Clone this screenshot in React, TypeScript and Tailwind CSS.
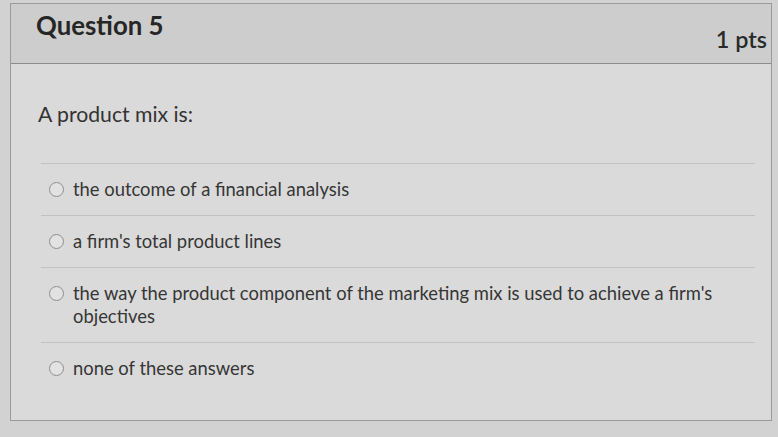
import React from "react";

const answers: string[][] = [
  ["the outcome of a financial analysis"],
  ["a firm's total product lines"],
  [
    "the way the product component of the marketing mix is used to achieve a firm's",
    "objectives",
  ],
  ["none of these answers"],
];

function Radio() {
  return (
    <span className="mt-[4px] h-[15px] w-[15px] shrink-0 rounded-full border-[1.5px] border-[#8e8e8e] bg-[#e2e2e2]" />
  );
}

export default function App() {
  return (
    <div
      className="h-[437px] w-[778px] overflow-hidden bg-[#d2d2d2] pt-[3px] pl-[10px]"
      style={{ fontFamily: "Lato, 'Open Sans', sans-serif" }}
    >
      <div className="flex h-[418px] w-[762px] flex-col border border-[#9a9a9a] bg-[#dadada]">
        <div className="flex h-[60px] shrink-0 items-start justify-between border-b-[1.5px] border-[#8c8c8c] bg-[#cdcdcd] pl-[25px] pr-[4px]">
          <h2 className="mt-[5px] text-[25.8px] font-bold leading-[32px] text-[#262626]">
            Question 5
          </h2>
          <span className="mt-[20px] text-[23.4px] font-semibold leading-[30px] text-[#2a2a2a]">
            1 pts
          </span>
        </div>
        <div className="flex flex-col pl-[27px] pr-[16px]">
          <p className="mt-[37px] text-[21.2px] leading-[26px] text-[#333333]">
            A product mix is:
          </p>
          <div className="mt-[36px] ml-[3px] flex flex-col">
            {answers.map((lines, i) => (
              <div
                key={i}
                className="flex items-start gap-[9px] border-t border-[#c2c2c2] py-[14px] pl-[8px]"
              >
                <Radio />
                <div className="text-[18.4px] leading-[23px] text-[#363636]">
                  {lines.map((l, j) => (
                    <div key={j}>{l}</div>
                  ))}
                </div>
              </div>
            ))}
          </div>
        </div>
      </div>
    </div>
  );
}
